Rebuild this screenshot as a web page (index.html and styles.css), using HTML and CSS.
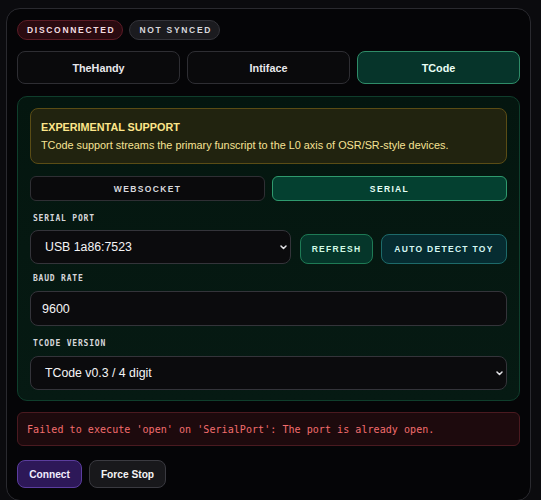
FILE: index.html
```html
<!DOCTYPE html>
<html>
<head>
<meta charset="utf-8">
<link rel="stylesheet" href="styles.css">
</head>
<body>
<div class="card">
  <div class="badges">
    <span class="badge badge-red">DISCONNECTED</span>
    <span class="badge badge-gray">NOT SYNCED</span>
  </div>
  <div class="tabs">
    <button class="tab">TheHandy</button>
    <button class="tab">Intiface</button>
    <button class="tab tab-active">TCode</button>
  </div>
  <div class="panel">
    <div class="warn">
      <div class="warn-title">EXPERIMENTAL SUPPORT</div>
      <div class="warn-text">TCode support streams the primary funscript to the L0 axis of OSR/SR-style devices.</div>
    </div>
    <div class="toggle">
      <button class="tog">WEBSOCKET</button>
      <button class="tog tog-active">SERIAL</button>
    </div>
    <div class="field field-first">
      <div class="label">SERIAL PORT</div>
      <div class="port-row">
        <div class="select select-port"><span>USB 1a86:7523</span><svg class="chev" width="7" height="5" viewBox="0 0 7 5"><path d="M1 1l2.5 2.5L6 1" fill="none" stroke="#e4e4e7" stroke-width="1.5" stroke-linecap="round" stroke-linejoin="round"/></svg></div>
        <button class="act act-green">REFRESH</button>
        <button class="act act-teal">AUTO DETECT TOY</button>
      </div>
    </div>
    <div class="field field-baud">
      <div class="label">BAUD RATE</div>
      <div class="input">9600</div>
    </div>
    <div class="field field-ver">
      <div class="label">TCODE VERSION</div>
      <div class="select"><span>TCode v0.3 / 4 digit</span><svg class="chev" width="7" height="5" viewBox="0 0 7 5"><path d="M1 1l2.5 2.5L6 1" fill="none" stroke="#e4e4e7" stroke-width="1.5" stroke-linecap="round" stroke-linejoin="round"/></svg></div>
    </div>
  </div>
  <div class="error">Failed to execute 'open' on 'SerialPort': The port is already open.</div>
  <div class="actions">
    <button class="btn btn-connect">Connect</button>
    <button class="btn btn-stop">Force Stop</button>
  </div>
</div>
</body>
</html>
```
FILE: styles.css
```css
* { box-sizing: border-box; }
html, body { margin: 0; padding: 0; }
body {
  background: #0b0b0e;
  padding: 8px 10px 0 6px;
  font-family: "Liberation Sans", Arial, sans-serif;
  color: #e4e4e7;
  height: 500px;
  overflow: hidden;
}
button { font-family: inherit; cursor: pointer; white-space: nowrap; padding: 0; }
.card {
  background: #050507;
  border: 1px solid #2a2a2f;
  border-radius: 14px;
  padding: 11px 10px 12px 10px;
  display: flex;
  flex-direction: column;
}
.badges { display: flex; gap: 6px; }
.badge {
  height: 20px;
  border-radius: 10px;
  font-size: 8.5px;
  font-weight: 700;
  letter-spacing: 1.7px;
  display: inline-flex;
  align-items: center;
  padding: 0 7px 0 9px;
}
.badge-red { background: #2a0a10; border: 1px solid #5c1c26; color: #f3dde0; }
.badge-gray { background: #1b1b1f; border: 1px solid #34343a; color: #d8d8dc; }
.tabs {
  margin-top: 11px;
  display: grid;
  grid-template-columns: 1fr 1fr 1fr;
  gap: 7px;
}
.tab {
  height: 33px;
  background: #0a0a0c;
  border: 1px solid #2e2e33;
  border-radius: 8px;
  color: #e8e8ec;
  font-size: 10.8px;
  font-weight: 700;
}
.tab-active { background: #06342a; border-color: #2f8c68; color: #eafff6; }
.panel {
  margin-top: 12px;
  background: linear-gradient(180deg, #04160f 0%, #061a13 100%);
  border: 1px solid #0f3e2c;
  border-radius: 10px;
  padding: 11px 12px 10px 12px;
}
.warn {
  height: 56px;
  background: #21230f;
  border: 1px solid #5a4c15;
  border-radius: 8px;
  padding: 11px 10px 0 10px;
}
.warn-title { font-size: 10.8px; font-weight: 700; color: #fde68a; line-height: 14px; }
.warn-text { font-size: 10.85px; color: #f6e294; line-height: 14px; margin-top: 4px; }
.toggle {
  margin-top: 12px;
  display: grid;
  grid-template-columns: 1fr 1fr;
  gap: 7px;
}
.tog {
  height: 25px;
  background: #0a0a0c;
  border: 1px solid #2f2f34;
  border-radius: 6px;
  color: #d8d8dc;
  font-size: 8.5px;
  font-weight: 700;
  letter-spacing: 1.35px;
}
.tog-active { background: #044030; border-color: #2f9a6e; color: #e6fff5; }
.field { display: flex; flex-direction: column; }
.field-first { margin-top: 12px; }
.field-first .label { margin-bottom: 5px; }
.field-baud { margin-top: 9px; }
.field-ver { margin-top: 12px; }
.label {
  font-family: "DejaVu Sans Mono", monospace;
  font-size: 8px;
  font-weight: 700;
  letter-spacing: 0.8px;
  color: #d6d6da;
  line-height: 12px;
  margin-bottom: 6px;
  padding-left: 3px;
}
.port-row { display: flex; align-items: flex-end; gap: 8px; }
.select {
  height: 34px;
  background: #0b0b0d;
  border: 1px solid #34343a;
  border-radius: 8px;
  display: flex;
  align-items: center;
  justify-content: space-between;
  padding: 0 3px 0 14px;
  font-size: 12.3px;
  color: #f4f4f5;
}
.select-port { flex: 1; margin-right: 1px; }
.input {
  height: 35px;
  background: #0b0b0d;
  border: 1px solid #34343a;
  border-radius: 8px;
  display: flex;
  align-items: center;
  padding: 0 11px;
  font-size: 12.5px;
  color: #f4f4f5;
}
.act {
  height: 30px;
  border-radius: 8px;
  font-size: 8.5px;
  font-weight: 700;
  letter-spacing: 1.3px;
}
.act-green { background: #05362a; border: 1px solid #1e7a55; color: #d1fae5; width: 73px; }
.act-teal { background: #062c31; border: 1px solid #1d6a6a; color: #d5f7f3; width: 126px; }
.error {
  margin-top: 11px;
  height: 34px;
  background: #1d0a0d;
  border: 1px solid #4a1a20;
  border-radius: 6px;
  display: flex;
  align-items: center;
  padding: 0 9px;
  font-family: "DejaVu Sans Mono", monospace;
  font-size: 10px;
  letter-spacing: 0.06px;
  color: #f26d6d;
}
.actions { margin-top: 14px; display: flex; gap: 7px; }
.btn {
  height: 28px;
  border-radius: 8px;
  font-size: 10.2px;
  font-weight: 700;
}
.btn-connect { background: #2d1858; border: 1px solid #5b3d9e; color: #f1ecff; width: 65px; }
.btn-stop { background: #18181b; border: 1px solid #3a3a40; color: #f4f4f5; width: 77px; }
```
